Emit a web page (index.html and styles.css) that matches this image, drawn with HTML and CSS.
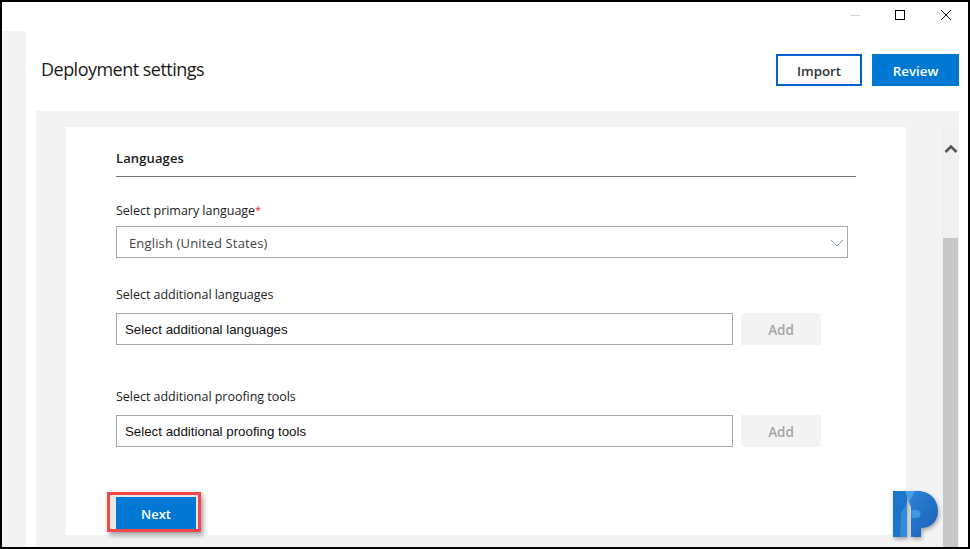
FILE: index.html
```html
<!DOCTYPE html>
<html lang="en">
<head>
<meta charset="utf-8">
<title>Deployment settings</title>
<link rel="stylesheet" href="styles.css">
</head>
<body>
<div class="window">
  <div class="titlebar">
    <span class="ctl"><svg width="12" height="12" viewBox="0 0 12 12"><path d="M1 6.500h10" stroke="#d4d4d4" stroke-width="1"/></svg></span>
    <span class="ctl"><svg width="12" height="12" viewBox="0 0 12 12"><rect x="1.500" y="1.500" width="9" height="9" fill="none" stroke="#000" stroke-width="1"/></svg></span>
    <span class="ctl ctl-close"><svg width="12" height="12" viewBox="0 0 12 12"><path d="M1 1l10 10M11 1L1 11" stroke="#111" stroke-width="1" fill="none"/></svg></span>
  </div>
  <div class="content">
    <div class="rail"></div>
    <main class="main">
      <header class="head">
        <h1 class="title">Deployment settings</h1>
        <div class="actions">
          <button class="btn btn-outline">Import</button>
          <button class="btn btn-primary">Review</button>
        </div>
      </header>
      <div class="panel">
        <section class="card">
          <h2 class="section-title">Languages</h2>
          <label class="label label-first">Select primary language<span class="req">*</span></label>
          <div class="select">
            <span>English (United States)</span>
            <svg class="chev" width="14" height="8" viewBox="0 0 14 8"><path d="M1 1l6 6 6-6" fill="none" stroke="#7a9fc0" stroke-width="1"/></svg>
          </div>
          <label class="label label-second">Select additional languages</label>
          <div class="row">
            <div class="input">Select additional languages</div>
            <button class="btn-add">Add</button>
          </div>
          <label class="label label-third">Select additional proofing tools</label>
          <div class="row">
            <div class="input">Select additional proofing tools</div>
            <button class="btn-add">Add</button>
          </div>
          <div class="highlight"><button class="btn-next">Next</button></div>
        </section>
        <div class="scrollbar">
          <svg class="scroll-up" width="14" height="10" viewBox="0 0 14 10"><path d="M1.500 8L7 2.500 12.500 8" fill="none" stroke="#555" stroke-width="2.600"/></svg>
          <div class="thumb"></div>
        </div>
      </div>
    </main>
  </div>
  <svg class="logo" width="50" height="54" viewBox="0 0 50 54">
    <defs>
      <linearGradient id="g" x1="0" y1="0" x2="1" y2="1">
        <stop offset="0" stop-color="#2f86d8"/>
        <stop offset="0.5" stop-color="#2272ca"/>
        <stop offset="1" stop-color="#1c5eb2"/>
      </linearGradient>
    </defs>
    <path d="M3 2H17V48H3Z" fill="#1b74cb"/>
    <path d="M11 24L17 14V48H10Z" fill="#4ea2e6" opacity="0.5"/>
    <path d="M15 2H28C40 2 48 11 48 22C48 33 40 39 31 39V48H21V18Z" fill="url(#g)"/>
    <path d="M15 2H25L19 13Z" fill="#4a9de4"/>
    <path d="M21.500 21H26Q30.500 21 30.500 25Q30.500 29 26 29H21.500Z" fill="#3d9ae0"/>
  </svg>
</div>
</body>
</html>
```
FILE: styles.css
```css
* { box-sizing: border-box; }
html, body { margin: 0; height: 100%; }
body { background: #000; font-family: "Open Sans", "Noto Sans", sans-serif; }
.window {
  position: relative;
  width: 970px;
  height: 549px;
  border: 2px solid #000;
  background: #fff;
  display: flex;
  flex-direction: column;
  overflow: hidden;
}
.titlebar {
  height: 29px;
  flex: none;
  display: flex;
  justify-content: flex-end;
  align-items: flex-start;
  padding: 7px 16px 0 0;
  gap: 33px;
}
.ctl { width: 12px; height: 12px; display: block; }
.ctl-close { margin-left: 1px; }
.ctl svg { display: block; }
.content { flex: 1; display: flex; min-height: 0; }
.rail { width: 24px; background: #f3f3f3; flex: none; }
.main { flex: 1; display: flex; flex-direction: column; padding-left: 10px; min-width: 0; }
.head {
  height: 80px;
  flex: none;
  width: 923px;
  display: flex;
  justify-content: space-between;
  padding: 23px 0 0 5px;
}
.title { margin: 0; font-size: 18px; font-weight: 400; line-height: 30px; color: #1b1b1b; letter-spacing: -0.52px; }
.actions { display: flex; gap: 10px; }
.btn {
  width: 86px;
  height: 32px;
  font-family: inherit;
  font-size: 13.300px;
  font-weight: 600;
  padding: 2px 0 0;
  margin: 0;
}
.btn-outline { background: #fff; border: 2px solid #0063d1; color: #333; }
.btn-primary { background: #0078d4; border: 0; color: #fff; width: 87px; }
.panel {
  flex: 1;
  background: #f3f3f3;
  display: flex;
  padding: 16px 1px 12px 30px;
  min-height: 0;
  width: 923px;
}
.card {
  width: 840px;
  background: #fff;
  padding: 19px 50px 0;
  flex: none;
}
.section-title {
  margin: 0;
  height: 31px;
  font-size: 13px;
  font-weight: 600;
  line-height: 24px;
  color: #1a1a1a;
  border-bottom: 1px solid #777;
  width: 740px;
  letter-spacing: 0.12px;
}
.label { display: block; font-size: 12.500px; line-height: 18px; color: #222; letter-spacing: -0.03px; }
.label-first { margin-top: 25px; margin-bottom: 6px; }
.label-second { margin-top: 28px; margin-bottom: 9px; }
.label-third { margin-top: 43px; margin-bottom: 9px; }
.req { color: #e8262e; font-size: 11px; line-height: 0; vertical-align: 1px; }
.select {
  width: 732px;
  height: 32px;
  border: 1px solid #a6a6a6;
  padding: 2px 3px 0 12px;
  display: flex;
  align-items: center;
  justify-content: space-between;
  font-size: 13px;
  color: #444;
  letter-spacing: 0.15px;
}
.chev { display: block; }
.row { display: flex; gap: 8px; }
.input {
  width: 617px;
  height: 32px;
  border: 1px solid #a6a6a6;
  padding: 0 8px;
  display: flex;
  align-items: center;
  font-family: "Liberation Sans", Arial, sans-serif;
  font-size: 13.300px;
  color: #111;
}
.btn-add {
  width: 80px;
  height: 32px;
  border: 0;
  padding: 2px 0 0;
  background: #f3f3f3;
  color: #a6a6a6;
  font-family: inherit;
  font-size: 13.500px;
  font-weight: 600;
}
.highlight {
  width: 94px;
  height: 40px;
  margin: 45px 0 0 -9px;
  border: 3px solid #f4474a;
  padding: 2px 2px 0 6px;
  box-shadow: 2px 3px 5px rgba(0,0,0,.4);
  background: #e8e8e8;
  display: flex;
}
.btn-next {
  width: 80px;
  height: 32px;
  border: 0;
  padding: 2px 0 0;
  background: #0078d4;
  color: #fff;
  font-family: inherit;
  font-size: 13px;
  font-weight: 600;
}
.scrollbar {
  margin-left: 36px;
  width: 16px;
  display: flex;
  flex-direction: column;
  align-items: flex-end;
  margin-bottom: -12px;
  background: #f0f0f0;
}
.scroll-up { display: block; margin-top: 17px; flex: none; }
.thumb { width: 15px; margin-top: 84px; flex: 1; background: #c8c8c8; }
.logo { position: absolute; left: 888px; top: 487px; filter: drop-shadow(1px 2px 2px rgba(0,0,0,.35)); }
```
